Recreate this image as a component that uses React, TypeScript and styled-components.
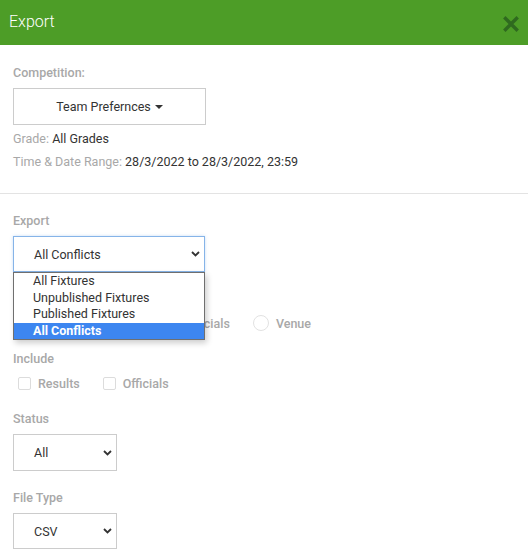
import styled, { createGlobalStyle } from "styled-components";

const GlobalStyle = createGlobalStyle`
  html, body {
    margin: 0;
    padding: 0;
    background: #ffffff;
  }
  body {
    font-family: Roboto, "Liberation Sans", Arial, sans-serif;
    font-size: 12.5px;
    color: #333333;
  }
`;

const exportOptions = ["All Fixtures", "Unpublished Fixtures", "Published Fixtures", "All Conflicts"];

const Chevron = () => (
  <svg width="9" height="6" viewBox="0 0 9 6">
    <polyline points="1,1 4.5,4.5 8,1" fill="none" stroke="#333" strokeWidth="1.8" />
  </svg>
);

export default function App() {
  return (
    <Modal>
      <GlobalStyle />
      <Header>
        <Title>Export</Title>
        <CloseBtn>
          <svg width="16" height="16" viewBox="0 0 16 16">
            <path d="M2.5 2.5 L13.5 13.5 M13.5 2.5 L2.5 13.5" stroke="#2f6a1f" strokeWidth="3.4" strokeLinecap="square" />
          </svg>
        </CloseBtn>
      </Header>

      <Section>
        <FieldLabel>Competition:</FieldLabel>
        <DropButton>
          Team Prefernces <Caret />
        </DropButton>
        <InfoLine style={{ marginTop: 5 }}>
          <Muted>Grade: </Muted>All Grades
        </InfoLine>
        <InfoLine style={{ marginTop: 5 }}>
          <Muted>Time &amp; Date Range: </Muted>28/3/2022 to 28/3/2022, 23:59
        </InfoLine>
      </Section>

      <Section $last>
        <Field>
          <FieldLabel>Export</FieldLabel>
          <SelectWrap>
            <SelectBox $width={192} $height={36} $focused>
              <span>All Conflicts</span>
              <Chevron />
            </SelectBox>
            <OptionList>
              {exportOptions.map((o) => (
                <OptionItem key={o} $selected={o === "All Conflicts"}>
                  {o}
                </OptionItem>
              ))}
            </OptionList>
          </SelectWrap>
        </Field>

        <Field>
          <FieldLabel>Group By</FieldLabel>
          <ChoiceRow>
            <Choice>
              <Radio /> Team Preferences
            </Choice>
            <Choice>
              <Radio /> Officials
            </Choice>
            <Choice>
              <Radio /> Venue
            </Choice>
          </ChoiceRow>
        </Field>

        <Field>
          <FieldLabel>Include</FieldLabel>
          <ChoiceRow $indent>
            <Choice>
              <Check /> Results
            </Choice>
            <Choice>
              <Check /> Officials
            </Choice>
          </ChoiceRow>
        </Field>

        <Field>
          <FieldLabel>Status</FieldLabel>
          <SelectBox $width={104} $height={37}>
            <span>All</span>
            <Chevron />
          </SelectBox>
        </Field>

        <Field>
          <FieldLabel>File Type</FieldLabel>
          <SelectBox $width={104} $height={36}>
            <span>CSV</span>
            <Chevron />
          </SelectBox>
        </Field>
      </Section>
    </Modal>
  );
}

const Modal = styled.div`
  width: 528px;
  height: 557px;
  overflow: hidden;
  background: #fff;
`;

const Header = styled.div`
  height: 45px;
  background: #4d9d27;
  display: flex;
  align-items: center;
  justify-content: space-between;
  padding: 0 9px 0 9px;
`;

const Title = styled.h4`
  margin: 0;
  color: #ffffff;
  font-size: 16px;
  font-weight: 300;
  line-height: 1;
  padding-bottom: 1px;
`;

const CloseBtn = styled.span`
  display: flex;
  margin-top: 2px;
`;

const Section = styled.div<{ $last?: boolean }>`
  padding: ${(p) => (p.$last ? "18px 13px 0" : "19px 13px 22px")};
  border-bottom: ${(p) => (p.$last ? "none" : "1px solid #e3e3e3")};
  display: flex;
  flex-direction: column;
  align-items: flex-start;
`;

const Field = styled.div`
  display: flex;
  flex-direction: column;
  align-items: flex-start;
  gap: 6px;
  margin-bottom: 18px;
`;

const FieldLabel = styled.div`
  color: #a8a8a8;
  font-weight: 500;
  line-height: 18px;
`;

const DropButton = styled.button`
  width: 193px;
  height: 37px;
  background: #fff;
  border: 1px solid #cccccc;
  border-radius: 0;
  font-family: inherit;
  font-size: 12.5px;
  color: #333;
  display: flex;
  align-items: center;
  justify-content: center;
  gap: 4px;
  padding: 0;
  margin-top: 6px;
`;

const Caret = styled.span`
  width: 0;
  height: 0;
  border-left: 4px solid transparent;
  border-right: 4px solid transparent;
  border-top: 4px solid #333;
  margin-top: 1px;
`;

const InfoLine = styled.div`
  line-height: 18px;
  color: #333;
`;

const Muted = styled.span`
  color: #a8a8a8;
`;

const SelectWrap = styled.div`
  position: relative;
`;

const SelectBox = styled.div<{ $width: number; $height: number; $focused?: boolean }>`
  box-sizing: border-box;
  width: ${(p) => p.$width}px;
  height: ${(p) => p.$height}px;
  border: 1px solid ${(p) => (p.$focused ? "#86b4e8" : "#cccccc")};
  box-shadow: ${(p) => (p.$focused ? "0 0 3px rgba(102,160,230,0.35)" : "none")};
  display: flex;
  align-items: center;
  justify-content: space-between;
  padding: 0 4px 0 20px;
  color: #333;
`;

const OptionList = styled.ul`
  position: absolute;
  top: 100%;
  left: 0;
  width: 192px;
  box-sizing: border-box;
  margin: 0;
  padding: 0;
  list-style: none;
  background: #fff;
  border: 1px solid #6f6f6f;
  box-shadow: 2px 3px 6px rgba(0, 0, 0, 0.2);
  z-index: 2;
`;

const OptionItem = styled.li<{ $selected?: boolean }>`
  height: 16.5px;
  line-height: 16.5px;
  padding-left: 19px;
  color: ${(p) => (p.$selected ? "#fff" : "#333")};
  background: ${(p) => (p.$selected ? "#3d86f0" : "transparent")};
  font-weight: ${(p) => (p.$selected ? 700 : 400)};
`;

const ChoiceRow = styled.div<{ $indent?: boolean }>`
  display: flex;
  align-items: center;
  gap: 23px;
  height: 18px;
  padding-left: ${(p) => (p.$indent ? "5px" : "0")};
`;

const Choice = styled.label`
  display: flex;
  align-items: center;
  gap: 7px;
  color: #a8a8a8;
  font-weight: 500;
`;

const Radio = styled.span`
  box-sizing: border-box;
  width: 16px;
  height: 16px;
  border-radius: 50%;
  border: 1.5px solid #e2e2e2;
`;

const Check = styled.span`
  box-sizing: border-box;
  width: 13px;
  height: 13px;
  border-radius: 2px;
  border: 1px solid #dcdcdc;
`;
